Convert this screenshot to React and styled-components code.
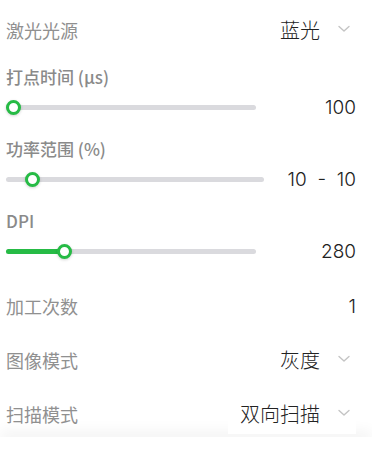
import React from "react";
import styled, { createGlobalStyle } from "styled-components";

const GlobalStyle = createGlobalStyle`
  html, body {
    margin: 0;
    padding: 0;
    background: #ffffff;
    font-family: Inter, "Noto Sans CJK SC", sans-serif;
  }
`;

const GREEN = "#26bb45";

const Page = styled.div`
  display: flex;
  flex-direction: column;
  height: 100vh;
  overflow: hidden;
`;

const List = styled.div`
  height: 437px;
  flex: none;
  overflow: hidden;
  padding: 4px 16px 0 6px;
  box-sizing: border-box;
`;

const Footer = styled.div`
  flex: 1;
  position: relative;
  z-index: 0;
  background: #ffffff;
  box-shadow: 0 -6px 14px rgba(0, 0, 0, 0.05);
`;

const Row = styled.div`
  display: flex;
  align-items: center;
  justify-content: space-between;
  height: ${(p) => p.$h || 54}px;
`;

const RowLabel = styled.div`
  font-size: 18px;
  font-weight: 400;
  color: #909090;
  font-family: "Noto Sans CJK SC", Inter, sans-serif;
`;

const Value = styled.div`
  font-size: 19px;
  font-weight: 300;
  color: #222222;
  font-family: Inter, "Noto Sans CJK SC", sans-serif;
  white-space: pre;
`;

const Select = styled.div`
  position: relative;
  z-index: 1;
  background: #ffffff;
  display: flex;
  align-items: center;
  gap: 18px;
  padding: 4px 6px 6px 12px;
`;

const SelectText = styled.span`
  font-size: 20px;
  font-weight: 300;
  color: #222222;
  font-family: "Noto Sans CJK SC", sans-serif;
`;

const SliderBlock = styled.div`
  padding-top: ${(p) => p.$top}px;
`;

const SliderLabel = styled.div`
  font-size: 17px;
  line-height: 20px;
  font-weight: 500;
  color: #8a8a8a;
  font-family: "Noto Sans CJK SC", Inter, sans-serif;
`;

const SliderRow = styled.div`
  display: flex;
  align-items: center;
  height: 20px;
  margin-top: 10px;
`;

const Track = styled.div`
  position: relative;
  flex: 1;
  height: 5px;
  border-radius: 3px;
  background: #dadade;
`;

const Fill = styled.div`
  position: absolute;
  left: 0;
  top: 0;
  bottom: 0;
  border-radius: 3px;
  background: ${GREEN};
`;

const Thumb = styled.div`
  position: absolute;
  top: 50%;
  width: 15px;
  height: 15px;
  margin-top: -7.5px;
  box-sizing: border-box;
  border-radius: 50%;
  border: 3px solid ${GREEN};
  background: #ffffff;
  box-shadow: 0 1px 3px rgba(0, 0, 0, 0.18);
`;

const SliderValue = styled(Value)`
  width: ${(p) => p.$w}px;
  flex: none;
  text-align: right;
`;

const Bottom = styled.div`
  padding-top: 18px;
`;

const Chevron = () => (
  <svg width="12" height="8" viewBox="0 0 12 8">
    <polyline
      points="1,1.5 6,6 11,1.5"
      fill="none"
      stroke="#c4c4c4"
      strokeWidth="1.4"
      strokeLinecap="round"
      strokeLinejoin="round"
    />
  </svg>
);

const Slider = ({ pct, fill, valueWidth, value }) => (
  <SliderRow>
    <Track>
      {fill && <Fill style={{ width: `calc(${pct}% + 7px - ${pct * 0.15}px)` }} />}
      <Thumb style={{ left: `calc(${pct}% - ${pct * 0.15}px)` }} />
    </Track>
    <SliderValue $w={valueWidth}>{value}</SliderValue>
  </SliderRow>
);

const SelectRow = ({ label, value, h }) => (
  <Row $h={h}>
    <RowLabel>{label}</RowLabel>
    <Select>
      <SelectText>{value}</SelectText>
      <Chevron />
    </Select>
  </Row>
);

const App = () => {
  return (
    <Page>
      <GlobalStyle />
      <List>
        <SelectRow label="激光光源" value="蓝光" h={52} />

        <SliderBlock $top={11}>
          <SliderLabel>打点时间 (μs)</SliderLabel>
          <Slider pct={0} valueWidth={100} value="100" />
        </SliderBlock>

        <SliderBlock $top={22}>
          <SliderLabel>功率范围 (%)</SliderLabel>
          <Slider pct={8} valueWidth={92} value="10  -  10" />
        </SliderBlock>

        <SliderBlock $top={22}>
          <SliderLabel>DPI</SliderLabel>
          <Slider pct={21.5} fill valueWidth={100} value="280" />
        </SliderBlock>

        <Bottom>
          <Row>
            <RowLabel>加工次数</RowLabel>
            <Value>1</Value>
          </Row>
          <SelectRow label="图像模式" value="灰度" />
          <SelectRow label="扫描模式" value="双向扫描" />
        </Bottom>
      </List>
      <Footer />
    </Page>
  );
};

export default App;
